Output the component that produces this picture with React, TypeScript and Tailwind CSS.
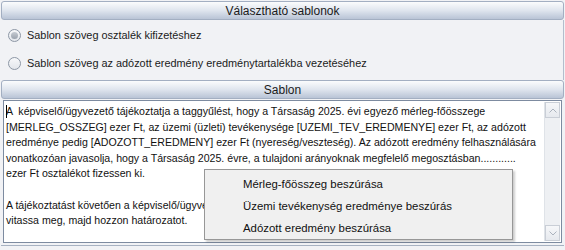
import React from 'react';

const lines = [
  'A  képviselő/ügyvezető tájékoztatja a taggyűlést, hogy a Társaság 2025. évi egyező mérleg-főösszege',
  '[MERLEG_OSSZEG] ezer Ft, az üzemi (üzleti) tevékenysége [UZEMI_TEV_EREDMENYE] ezer Ft, az adózott',
  'eredménye pedig [ADOZOTT_EREDMENY] ezer Ft (nyereség/veszteség). Az adózott eredmény felhasználására',
  'vonatkozóan javasolja, hogy a Társaság 2025. évre, a tulajdoni arányoknak megfelelő megosztásban............',
  'ezer Ft osztalékot fizessen ki.',
  '',
  'A tájékoztatást követően a képviselő/ügyvezető kéri, hogy a taggyűlés a fentieket a taggyűlés',
  'vitassa meg, majd hozzon határozatot.',
];

function Header({ title }: { title: string }) {
  return (
    <div className="mx-[1px] h-[19px] rounded-[3px] border border-[#a3afc2] bg-gradient-to-b from-[#fbfcfd] via-[#dfe5ee] to-[#b9c4d6] flex items-center justify-center text-[12px] text-[#1b1b1b]">
      {title}
    </div>
  );
}

function Radio({ checked, label }: { checked?: boolean; label: string }) {
  return (
    <div className="flex items-center h-[14px]">
      <div className="w-[13px] h-[13px] rounded-full border border-[#8d97a5] bg-gradient-to-b from-[#f7f8fa] to-[#e3e6eb] flex items-center justify-center ml-[8px]">
        {checked && <div className="w-[7px] h-[7px] rounded-full bg-gradient-to-b from-[#c6cbd2] to-[#9aa2ad]" />}
      </div>
      <span className="ml-[6px] text-[10.9px] text-[#1b1b1b]">{label}</span>
    </div>
  );
}

export default function App() {
  return (
    <div className="w-[565px] h-[250px] bg-[#f1f2f5] overflow-hidden pt-[1px]" style={{ fontFamily: '"Liberation Sans", Arial, sans-serif' }}>
      <Header title="Választható sablonok" />

      {/* radio options */}
      <div className="h-[60px] border-r border-[#b3bdcc] mr-[1px] flex flex-col pt-[8px] gap-[14px]">
        <Radio checked label="Sablon szöveg osztalék kifizetéshez" />
        <Radio label="Sablon szöveg az adózott eredmény eredménytartalékba vezetéséhez" />
      </div>

      <Header title="Sablon" />

      {/* template text */}
      <div className="relative mx-[3px] mt-[1px] h-[143px] border border-[#7d8ba0] bg-white flex">
        <div className="flex-1 min-w-0 overflow-hidden pl-[2px] pt-[3px] text-[10.6px] leading-[15.6px] text-[#111] whitespace-pre">
          {lines.map((l, i) => (
            <div key={i} className="h-[15.6px] relative">
              {i === 0 && <span className="absolute left-0 top-[1px] w-[1px] h-[13px] bg-black" />}
              {l}
            </div>
          ))}
        </div>
        <div className="w-[16px] my-[1px] mr-[1px] bg-[#eef0f3] border-l border-[#dfe3e8] flex flex-col justify-between">
          <div className="h-[16px] border border-[#c9ced6] bg-gradient-to-b from-[#f6f7f9] to-[#e6e9ee] flex items-center justify-center">
            <svg width="8" height="5" viewBox="0 0 8 5"><path d="M0.5 4.5 L4 1 L7.5 4.5" fill="none" stroke="#aab2bd" /></svg>
          </div>
          <div className="h-[16px] border border-[#c9ced6] bg-gradient-to-b from-[#f6f7f9] to-[#e6e9ee] flex items-center justify-center">
            <svg width="8" height="5" viewBox="0 0 8 5"><path d="M0.5 0.5 L4 4 L7.5 0.5" fill="none" stroke="#aab2bd" /></svg>
          </div>
        </div>

        {/* context menu */}
        <div className="absolute left-[200px] top-[68px] w-[309px] h-[71px] bg-[#f0f0f0] border border-[#979797] shadow-[2px_2px_2px_rgba(0,0,0,0.2)] flex flex-col pt-[4px] text-[11.4px] text-[#111]">
          <div className="h-[22px] flex items-center pl-[38px]">Mérleg-főösszeg beszúrása</div>
          <div className="h-[22px] flex items-center pl-[38px]">Üzemi tevékenység eredménye beszúrás</div>
          <div className="h-[22px] flex items-center pl-[38px]">Adózott eredmény beszúrása</div>
        </div>
      </div>
      <div className="mx-[1px] mt-[2px] h-[1px] bg-[#a7b2c2]" />
    </div>
  );
}
